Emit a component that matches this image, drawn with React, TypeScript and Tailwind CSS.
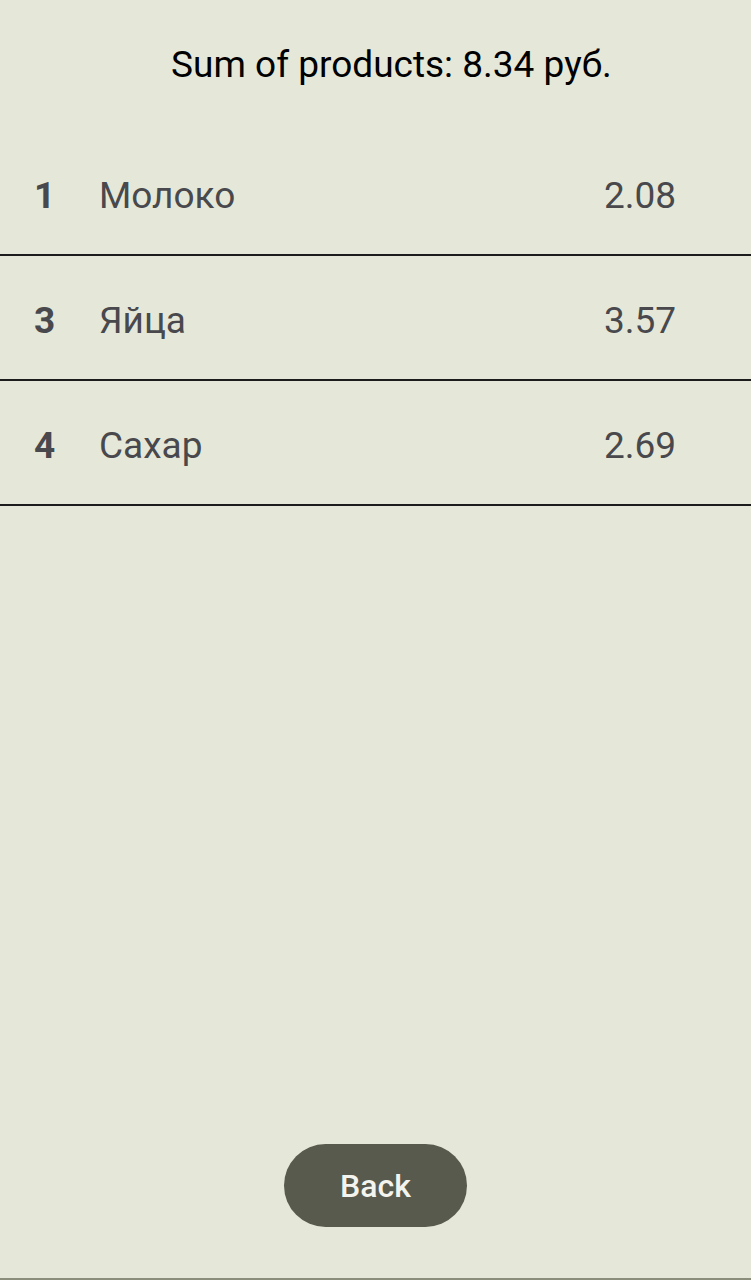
export default function App() {
  const items = [
    { n: "1", name: "Молоко", price: "2.08" },
    { n: "3", name: "Яйца", price: "3.57" },
    { n: "4", name: "Сахар", price: "2.69" },
  ];
  return (
    <div
      className="h-[1280px] w-full bg-[#e5e8d8] flex flex-col"
      style={{ fontFamily: "Roboto, 'Noto Sans', sans-serif" }}
    >
      <div className="h-[131px] flex items-start justify-center pt-[43px] pl-[32px]">
        <span className="text-[37px] leading-[44px] text-black">Sum of products: 8.34 руб.</span>
      </div>
      {items.map((it) => (
        <div
          key={it.n}
          className="h-[125px] border-b-2 border-[#1c1c1c] flex items-center pt-[6px] text-[#48484d] text-[37px] leading-[44px]"
        >
          <span className="w-[99px] pl-[34px] font-bold">{it.n}</span>
          <span className="w-[505px]">{it.name}</span>
          <span>{it.price}</span>
        </div>
      ))}
      <div className="flex-1" />
      <div className="flex justify-center">
        <button className="w-[183px] h-[83px] rounded-full bg-[#585a4e] text-[#f4f4ee] text-[32px] font-medium">
          Back
        </button>
      </div>
      <div className="h-[51px]" />
      <div className="h-[2px] bg-[#8a8d7a]" />
    </div>
  );
}
